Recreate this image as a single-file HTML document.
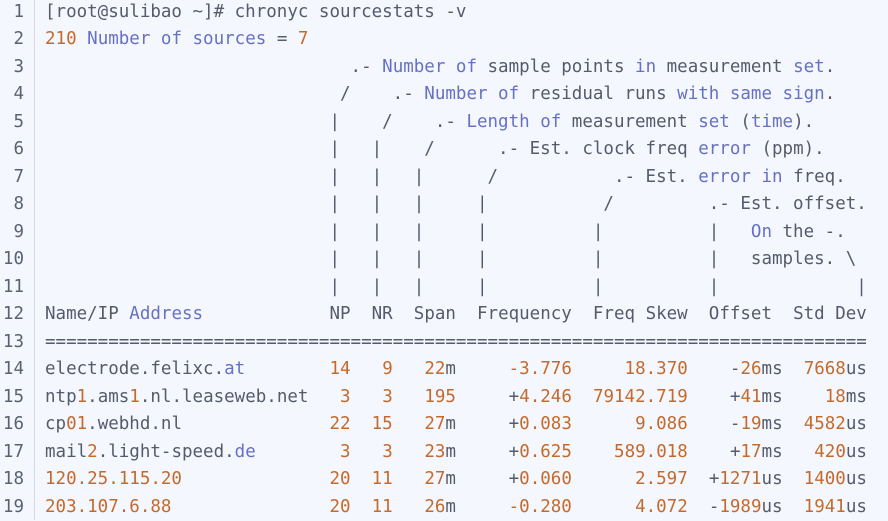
<!DOCTYPE html>
<html><head><meta charset="utf-8"><style>
html,body{margin:0;padding:0;background:#f5f7fe;width:888px;height:521px;overflow:hidden}
.wrap{position:relative;top:-1.5px;height:521px;overflow:hidden}
.ln{position:absolute;left:0;top:0;width:34px;border-right:1px solid #d4d8e4;height:523px}
.ln div{text-align:right;padding-right:10px;color:#5a6272}
pre,.ln{font-family:"DejaVu Sans Mono","Liberation Mono",monospace;font-size:17.5px;line-height:27.5px;margin:0}
pre{position:absolute;left:45px;top:0;color:#555b6b}
.k{color:#6670c4}.n{color:#c46a2c}
</style></head><body><div class="wrap">
<div class="ln"><div>1</div><div>2</div><div>3</div><div>4</div><div>5</div><div>6</div><div>7</div><div>8</div><div>9</div><div>10</div><div>11</div><div>12</div><div>13</div><div>14</div><div>15</div><div>16</div><div>17</div><div>18</div><div>19</div></div>
<pre>[root@sulibao ~]# chronyc sourcestats -v
<span class="n">210</span> <span class="k">Number of sources</span> = <span class="n">7</span>
                             .- <span class="k">Number of</span> sample points <span class="k">in</span> measurement <span class="k">set</span>.
                            /    .- <span class="k">Number of</span> residual runs <span class="k">with same sign</span>.
                           |    /    .- <span class="k">Length of</span> measurement <span class="k">set</span> (<span class="k">time</span>).
                           |   |    /      .- Est. clock freq <span class="k">error</span> (ppm).
                           |   |   |      /           .- Est. <span class="k">error in</span> freq.
                           |   |   |     |           /         .- Est. offset.
                           |   |   |     |          |          |   <span class="k">On</span> the -.
                           |   |   |     |          |          |   samples. \
                           |   |   |     |          |          |             |
Name/IP <span class="k">Address</span>            NP  NR  Span  Frequency  Freq Skew  Offset  Std Dev
==============================================================================
electrode.felixc.<span class="k">at</span>        <span class="n">14</span>   <span class="n">9</span>   <span class="n">22</span>m     <span class="n">-3.776</span>     <span class="n">18.370</span>    -<span class="n">26</span>ms  <span class="n">7668</span>us
ntp<span class="n">1</span>.ams<span class="n">1</span>.nl.leaseweb.net   <span class="n">3</span>   <span class="n">3</span>   <span class="n">195</span>     +<span class="n">4.246</span>  <span class="n">79142.719</span>    +<span class="n">41</span>ms    <span class="n">18</span>ms
cp<span class="n">01</span>.webhd.nl              <span class="n">22</span>  <span class="n">15</span>   <span class="n">27</span>m     +<span class="n">0.083</span>      <span class="n">9.086</span>    -<span class="n">19</span>ms  <span class="n">4582</span>us
mail<span class="n">2</span>.light-speed.<span class="k">de</span>        <span class="n">3</span>   <span class="n">3</span>   <span class="n">23</span>m     +<span class="n">0.625</span>    <span class="n">589.018</span>    +<span class="n">17</span>ms   <span class="n">420</span>us
<span class="n">120.25.115.20</span>              <span class="n">20</span>  <span class="n">11</span>   <span class="n">27</span>m     +<span class="n">0.060</span>      <span class="n">2.597</span>  +<span class="n">1271</span>us  <span class="n">1400</span>us
<span class="n">203.107.6.88</span>               <span class="n">20</span>  <span class="n">11</span>   <span class="n">26</span>m     <span class="n">-0.280</span>      <span class="n">4.072</span>  -<span class="n">1989</span>us  <span class="n">1941</span>us</pre>
</div></body></html>
